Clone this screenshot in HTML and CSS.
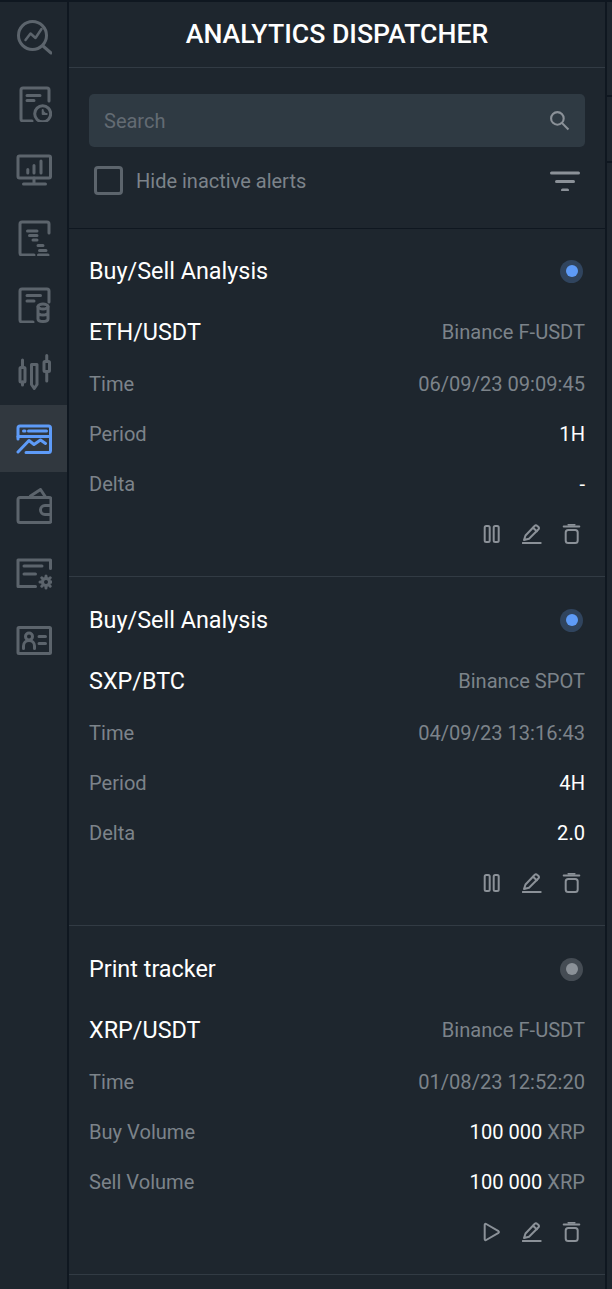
FILE: index.html
```html
<!DOCTYPE html>
<html lang="en">
<head>
    <meta charset="UTF-8">
    <meta name="viewport" content="width=device-width, initial-scale=1.0">
    <title>Analytics Dispatcher</title>
    <link rel="stylesheet" href="styles.css">
</head>
<body>
    <svg class="defs" width="0" height="0">
        <symbol id="ico-pause" viewBox="0 0 20 20"><rect x="2.7" y="2" width="5" height="16" rx="1.5"/><rect x="11.7" y="2" width="5" height="16" rx="1.5"/></symbol>
        <symbol id="ico-play" viewBox="0 0 20 20"><path d="M2.700 2.800v14.400a1 1 0 0 0 1.500.8L16.500 10.800a1 1 0 0 0 0-1.600L4.200 2a1 1 0 0 0-1.500.8z"/></symbol>
        <symbol id="ico-edit" viewBox="0 0 20 20"><path d="M2 16 3.500 11.500 12.800 1.800a1.500 1.500 0 0 1 2.200-.1l1.500 1.400a1.500 1.500 0 0 1 0 2.200L7 14.800z"/><path d="M11 3.800l3.800 3.500"/><path d="M.7 19h18"/></symbol>
        <symbol id="ico-trash" viewBox="0 0 20 20"><path d="M1.700 2.500h15.600"/><path d="M6.500 .8h6"/><rect x="3.700" y="6" width="12" height="13" rx="2.500"/></symbol>
    </svg>

    <div class="app">
        <!-- Left icon rail -->
        <nav class="rail">
            <a class="rail-item">
                <svg viewBox="0 0 36 36"><circle cx="16.500" cy="16.500" r="14"/><path d="M27 27l8 7"/><path class="thin" d="M9.500 21l5-6.500 5 4.500 6-9"/></svg>
            </a>
            <a class="rail-item">
                <svg viewBox="0 0 36 36"><path d="M16 35H7a2 2 0 0 1-2-2V4a2 2 0 0 1 2-2h24a2 2 0 0 1 2 2v11"/><path d="M11 9.500h13M11 14.500h7"/><circle cx="26.700" cy="27.800" r="8"/><path class="wedge" d="M26.700 24v4h4"/></svg>
            </a>
            <a class="rail-item">
                <svg viewBox="0 0 36 36"><rect x="2" y="3" width="32.500" height="22" rx="1.500"/><path d="M18 25v6M7.500 31h22"/><path d="M11.800 16.500V20M18 12.500V20M25 8v12"/></svg>
            </a>
            <a class="rail-item">
                <svg viewBox="0 0 36 36"><path d="M18 35H6a2 2 0 0 1-2-2V4a2 2 0 0 1 2-2h25a2 2 0 0 1 2 2v9"/><path d="M11.500 11H21M13.500 15.500H21M17 20h4M22 25.500h5M23.500 30.500H30M22.500 35H32"/></svg>
            </a>
            <a class="rail-item">
                <svg viewBox="0 0 36 36"><path d="M17 35H6a2 2 0 0 1-2-2V4a2 2 0 0 1 2-2h25a2 2 0 0 1 2 2v11"/><path d="M11 8.500h13.500M11 14h7"/><ellipse cx="27" cy="19.500" rx="5" ry="2.500"/><path d="M22 19.500v12.500c0 1.400 2.200 2.500 5 2.500s5-1.100 5-2.500V19.500M22 25.500c0 1.400 2.200 2.500 5 2.500s5-1.100 5-2.500"/></svg>
            </a>
            <a class="rail-item">
                <svg viewBox="0 0 36 36"><rect x="4" y="13.500" width="5" height="14.500" rx="1"/><path d="M6.500 6v7.500M6.500 28v3"/><path d="M15.500 10.500h5.500v20l-2.750 4-2.750-4z"/><rect x="28" y="7.500" width="5.500" height="10" rx="1"/><path d="M30.750 1.500v6M30.750 17.500V27"/></svg>
            </a>
            <a class="rail-item active">
                <svg viewBox="0 0 36 36"><path d="M2 18V7a2 2 0 0 1 2-2h28.500a2 2 0 0 1 2 2v22.500a2 2 0 0 1-2 2H10"/><path d="M2 15.500h32.500"/><path d="M7.500 10h1.500M12.500 10h18"/><path d="M2 31l11-11.500 5 4 6.500-4.500 5 3.500"/></svg>
            </a>
            <a class="rail-item">
                <svg viewBox="0 0 36 36"><path d="M4 9.500h29a2 2 0 0 1 2 2v21a2 2 0 0 1-2 2H4a2 2 0 0 1-2-2v-21a2 2 0 0 1 2-2z"/><path d="M14.500 8l10-6.500 5 7.500"/><path d="M35 17.500h-6a4.500 4.500 0 0 0 0 9h6"/></svg>
            </a>
            <a class="rail-item">
                <svg viewBox="0 0 36 36"><path d="M19.500 31.500H2V5h32.500v8.500"/><path d="M8 11h18M8 19h11.500"/><circle cx="30" cy="27" r="3.500"/><path class="thick" d="M30 21v2M30 31v2M24 27h2M34 27h2M25.800 22.800l1.400 1.400M32.800 29.800l1.400 1.400M34.200 22.800l-1.400 1.400M27.200 29.800l-1.400 1.400"/></svg>
            </a>
            <a class="rail-item">
                <svg viewBox="0 0 36 36"><rect x="2" y="5.500" width="32.500" height="26" rx="1"/><circle cx="13" cy="14.500" r="3.500"/><path d="M7.500 26.500v-2.500a5.500 5.500 0 0 1 11 0v2.500"/><path d="M23 14.500h6.500M23 21.500h6.500"/></svg>
            </a>
        </nav>

        <!-- Panel -->
        <main class="panel">
            <header class="panel-head">ANALYTICS DISPATCHER</header>

            <section class="filters">
                <div class="search">
                    <span class="search-text">Search</span>
                    <svg viewBox="0 0 20 20"><circle cx="8" cy="8" r="6"/><path d="M12.500 12.500l6 6"/></svg>
                </div>
                <div class="filter-row">
                    <span class="check"></span>
                    <span class="check-label">Hide inactive alerts</span>
                    <svg class="filter-ico" viewBox="0 0 30 20"><path d="M1.500 2h27"/><path d="M6.500 10.500h17"/><path d="M12.500 19h5"/></svg>
                </div>
            </section>

            <article class="alert">
                <div class="alert-head">
                    <span class="alert-name">Buy/Sell Analysis</span>
                    <span class="dot on"></span>
                </div>
                <div class="pair-row">
                    <span class="pair">ETH/USDT</span>
                    <span class="muted">Binance F-USDT</span>
                </div>
                <div class="rows">
                    <div class="row"><span>Time</span><span>06/09/23 09:09:45</span></div>
                    <div class="row"><span>Period</span><b>1H</b></div>
                    <div class="row"><span>Delta</span><b>-</b></div>
                </div>
                <div class="actions">
                    <svg><use href="#ico-pause"/></svg>
                    <svg><use href="#ico-edit"/></svg>
                    <svg><use href="#ico-trash"/></svg>
                </div>
            </article>

            <article class="alert">
                <div class="alert-head">
                    <span class="alert-name">Buy/Sell Analysis</span>
                    <span class="dot on"></span>
                </div>
                <div class="pair-row">
                    <span class="pair">SXP/BTC</span>
                    <span class="muted">Binance SPOT</span>
                </div>
                <div class="rows">
                    <div class="row"><span>Time</span><span>04/09/23 13:16:43</span></div>
                    <div class="row"><span>Period</span><b>4H</b></div>
                    <div class="row"><span>Delta</span><b>2.0</b></div>
                </div>
                <div class="actions">
                    <svg><use href="#ico-pause"/></svg>
                    <svg><use href="#ico-edit"/></svg>
                    <svg><use href="#ico-trash"/></svg>
                </div>
            </article>

            <article class="alert">
                <div class="alert-head">
                    <span class="alert-name">Print tracker</span>
                    <span class="dot off"></span>
                </div>
                <div class="pair-row">
                    <span class="pair">XRP/USDT</span>
                    <span class="muted">Binance F-USDT</span>
                </div>
                <div class="rows">
                    <div class="row"><span>Time</span><span>01/08/23 12:52:20</span></div>
                    <div class="row"><span>Buy Volume</span><span><b>100 000</b> XRP</span></div>
                    <div class="row"><span>Sell Volume</span><span><b>100 000</b> XRP</span></div>
                </div>
                <div class="actions">
                    <svg><use href="#ico-play"/></svg>
                    <svg><use href="#ico-edit"/></svg>
                    <svg><use href="#ico-trash"/></svg>
                </div>
            </article>
        </main>

        <!-- Sliver of the page behind the panel -->
        <div class="edge">
            <div class="edge-line"></div>
            <div class="edge-line second"></div>
        </div>
    </div>
</body>
</html>
```

FILE: styles.css
```css
/* General */
* {
    box-sizing: border-box;
}

html, body {
    margin: 0;
    height: 100%;
    overflow: hidden;
}

body {
    font-family: Roboto, sans-serif;
    background: #0f1720;
    color: #fff;
}

.defs {
    position: absolute;
}

.app {
    display: flex;
    height: 1289px;
    padding-top: 2px;
}

/* Icon rail */
.rail {
    width: 67px;
    background: #1e262e;
    display: flex;
    flex-direction: column;
    padding-top: 1px;
    flex-shrink: 0;
}

.rail-item {
    height: 67px;
    display: flex;
    align-items: center;
    justify-content: center;
}

.rail-item svg {
    width: 36px;
    height: 36px;
    fill: none;
    stroke: #5c646c;
    stroke-width: 3;
    stroke-linecap: round;
    stroke-linejoin: round;
}

.rail-item .thin {
    stroke-width: 2.5;
}

.rail-item .thick {
    stroke-width: 3;
}

.rail-item .wedge {
    fill: #5c646c;
    stroke-width: 2;
}

.rail-item.active {
    background: #31383f;
}

.rail-item.active svg {
    stroke: #5e9bf8;
}

/* Panel */
.panel {
    width: 536px;
    margin-left: 2px;
    background: #1e262e;
    flex-shrink: 0;
}

.panel-head {
    height: 66px;
    padding-bottom: 2px;
    border-bottom: 1px solid #323b44;
    display: flex;
    align-items: center;
    justify-content: center;
    font-size: 26.7px;
    font-weight: 500;
}

.filters {
    height: 161px;
    margin-bottom: -1px;
    padding: 26px 20px 0;
    border-bottom: 1px solid #0f1720;
    position: relative;
}

.search {
    height: 53px;
    background: #2f3a43;
    border-radius: 5px;
    padding: 0 15px;
    display: flex;
    align-items: center;
    justify-content: space-between;
}

.search-text {
    font-size: 20px;
    color: #636b73;
}

.search svg {
    width: 21px;
    height: 21px;
    fill: none;
    stroke: #8b9198;
    stroke-width: 2;
}

.filter-row {
    display: flex;
    align-items: center;
    margin-top: 19px;
    padding: 0 5px;
}

.check {
    width: 29px;
    height: 29px;
    border: 3px solid #5c646c;
    border-radius: 4px;
}

.check-label {
    font-size: 20px;
    color: #7c838a;
    margin-left: 13px;
    flex: 1;
}

.filter-ico {
    width: 30px;
    height: 20px;
    fill: none;
    stroke: #8b9198;
    stroke-width: 3;
    stroke-linecap: round;
}

/* Alert cards */
.alert {
    height: 349px;
    padding: 0 20px;
    border-bottom: 1px solid #323b44;
}

.alert-head {
    display: flex;
    align-items: center;
    justify-content: space-between;
    height: 86px;
}

.alert-name {
    font-size: 23.4px;
}

.dot {
    width: 23px;
    height: 23px;
    margin-right: 2px;
    border-radius: 50%;
    display: flex;
    align-items: center;
    justify-content: center;
}

.dot::after {
    content: "";
    width: 12px;
    height: 12px;
    border-radius: 50%;
}

.dot.on {
    background: #30445e;
}

.dot.on::after {
    background: #5e9bf8;
}

.dot.off {
    background: #454c54;
}

.dot.off::after {
    background: #8b9198;
}

.pair-row {
    display: flex;
    align-items: center;
    justify-content: space-between;
    height: 36px;
}

.pair {
    font-size: 23.4px;
}

.muted {
    font-size: 20.1px;
    color: #7c838a;
}

.rows {
    margin-top: 9px;
}

.row {
    display: flex;
    align-items: center;
    justify-content: space-between;
    height: 50px;
    font-size: 20.1px;
    color: #7c838a;
}

.row b {
    font-weight: 400;
    color: #fff;
}

/* Card action icons */
.actions {
    display: flex;
    justify-content: flex-end;
    gap: 20px;
    margin-top: 15px;
    padding-right: 3px;
}

.actions svg {
    width: 20px;
    height: 20px;
    fill: none;
    stroke: #8b9198;
    stroke-width: 2;
    stroke-linejoin: round;
    stroke-linecap: round;
}

/* Right edge */
.edge {
    width: 5px;
    margin-left: 2px;
    background: #1e262e;
    flex-shrink: 0;
}

.edge-line {
    height: 2px;
    margin-top: 93px;
    background: #0f1720;
}

.edge-line.second {
    margin-top: 64px;
}
```
